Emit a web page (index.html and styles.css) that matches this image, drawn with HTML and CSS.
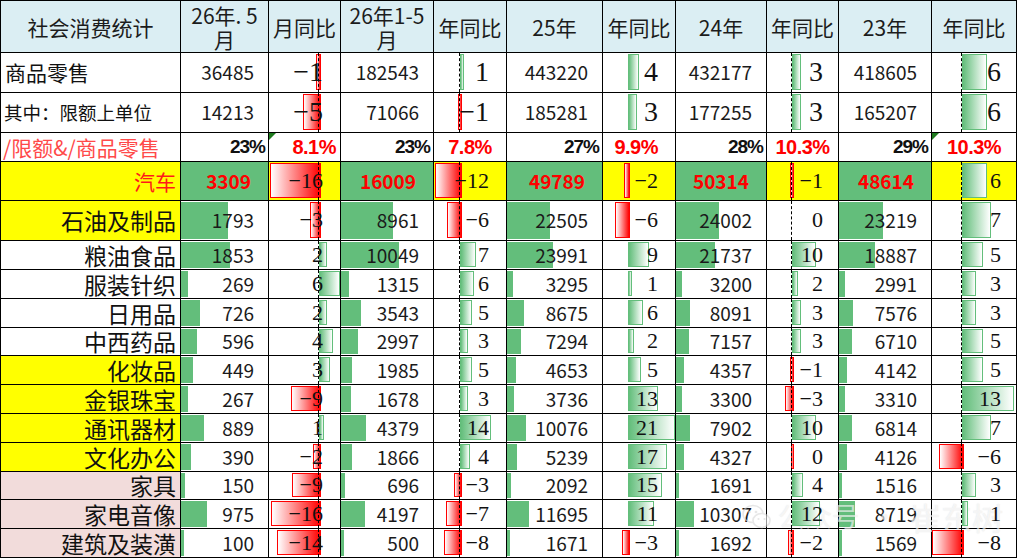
FILE: index.html
```html
<!DOCTYPE html>
<html lang="zh-CN">
<head>
<meta charset="utf-8">
<title>社会消费统计</title>
<link rel="stylesheet" href="styles.css">
</head>
<body>
<div class="sheet">
  <div class="h">社会消费统计</div>
  <div class="h">26年. 5<br>月</div>
  <div class="h">月同比</div>
  <div class="h">26年1-5<br>月</div>
  <div class="h">年同比</div>
  <div class="h">25年</div>
  <div class="h">年同比</div>
  <div class="h">24年</div>
  <div class="h">年同比</div>
  <div class="h">23年</div>
  <div class="h">年同比</div>

  <div class="lbl l">商品零售</div>
  <div class="v">36485</div>
  <div class="q m n big" style="--w:3px"><span>−1</span></div>
  <div class="v">182543</div>
  <div class="q c1 g big" style="--w:2px"><span>1</span></div>
  <div class="v">443220</div>
  <div class="q c2 g big" style="--w:9px"><span>4</span></div>
  <div class="v">432177</div>
  <div class="q c3 g big" style="--w:7px"><span>3</span></div>
  <div class="v">418605</div>
  <div class="q c4 g big" style="--w:23px"><span>6</span></div>

  <div class="lbl l sm">其中：限额上单位</div>
  <div class="v">14213</div>
  <div class="q m n big" style="--w:16px"><span>−5</span></div>
  <div class="v">71066</div>
  <div class="q c1 n big" style="--w:2px"><span>−1</span></div>
  <div class="v">185281</div>
  <div class="q c2 g big" style="--w:7px"><span>3</span></div>
  <div class="v">177255</div>
  <div class="q c3 g big" style="--w:7px"><span>3</span></div>
  <div class="v">165207</div>
  <div class="q c4 g big" style="--w:23px"><span>6</span></div>

  <div class="lbl l ratio">/限额&amp;/商品零售</div>
  <div class="pc">23%</div>
  <div class="rp r tri">8.1%</div>
  <div class="pc">23%</div>
  <div class="rp">7.8%</div>
  <div class="pc">27%</div>
  <div class="rp r2">9.9%</div>
  <div class="pc">28%</div>
  <div class="rp">10.3%</div>
  <div class="pc">29%</div>
  <div class="rp tri">10.3%</div>

  <div class="lbl y car">汽车</div>
  <div class="v car" style="--w:87px">3309</div>
  <div class="q m n y" style="--w:49px"><span>−16</span></div>
  <div class="v car" style="--w:92px">16009</div>
  <div class="q c1 n y" style="--w:25px"><span>−12</span></div>
  <div class="v car" style="--w:95px">49789</div>
  <div class="q c2 n y" style="--w:4px"><span>−2</span></div>
  <div class="v car" style="--w:90px">50314</div>
  <div class="q c3 n y" style="--w:2px"><span>−1</span></div>
  <div class="v car" style="--w:92px">48614</div>
  <div class="q c4 g y" style="--w:23px"><span>6</span></div>

  <div class="lbl y">石油及制品</div>
  <div class="v" style="--w:47px">1793</div>
  <div class="q m n" style="--w:9px"><span>−3</span></div>
  <div class="v" style="--w:52px">8961</div>
  <div class="q c1 n" style="--w:13px"><span>−6</span></div>
  <div class="v" style="--w:43px">22505</div>
  <div class="q c2 n" style="--w:13px"><span>−6</span></div>
  <div class="v" style="--w:43px">24002</div>
  <div class="q c3"><span>0</span></div>
  <div class="v" style="--w:44px">23219</div>
  <div class="q c4 g" style="--w:27px"><span>7</span></div>

  <div class="lbl">粮油食品</div>
  <div class="v" style="--w:49px">1853</div>
  <div class="q m g" style="--w:6px"><span>2</span></div>
  <div class="v" style="--w:58px">10049</div>
  <div class="q c1 g" style="--w:14px"><span>7</span></div>
  <div class="v" style="--w:46px">23991</div>
  <div class="q c2 g" style="--w:19px"><span>9</span></div>
  <div class="v" style="--w:39px">21737</div>
  <div class="q c3 g" style="--w:22px"><span>10</span></div>
  <div class="v" style="--w:36px">18887</div>
  <div class="q c4 g" style="--w:19px"><span>5</span></div>

  <div class="lbl">服装针织</div>
  <div class="v" style="--w:7px">269</div>
  <div class="q m g" style="--w:19px"><span>6</span></div>
  <div class="v" style="--w:8px">1315</div>
  <div class="q c1 g" style="--w:12px"><span>6</span></div>
  <div class="v" style="--w:6px">3295</div>
  <div class="q c2 g" style="--w:2px"><span>1</span></div>
  <div class="v" style="--w:6px">3200</div>
  <div class="q c3 g" style="--w:4px"><span>2</span></div>
  <div class="v" style="--w:6px">2991</div>
  <div class="q c4 g" style="--w:12px"><span>3</span></div>

  <div class="lbl">日用品</div>
  <div class="v" style="--w:19px">726</div>
  <div class="q m g" style="--w:6px"><span>2</span></div>
  <div class="v" style="--w:20px">3543</div>
  <div class="q c1 g" style="--w:10px"><span>5</span></div>
  <div class="v" style="--w:17px">8675</div>
  <div class="q c2 g" style="--w:13px"><span>6</span></div>
  <div class="v" style="--w:14px">8091</div>
  <div class="q c3 g" style="--w:7px"><span>3</span></div>
  <div class="v" style="--w:14px">7576</div>
  <div class="q c4 g" style="--w:12px"><span>3</span></div>

  <div class="lbl">中西药品</div>
  <div class="v" style="--w:16px">596</div>
  <div class="q m g" style="--w:12px"><span>4</span></div>
  <div class="v" style="--w:17px">2997</div>
  <div class="q c1 g" style="--w:6px"><span>3</span></div>
  <div class="v" style="--w:14px">7294</div>
  <div class="q c2 g" style="--w:4px"><span>2</span></div>
  <div class="v" style="--w:13px">7157</div>
  <div class="q c3 g" style="--w:7px"><span>3</span></div>
  <div class="v" style="--w:13px">6710</div>
  <div class="q c4 g" style="--w:19px"><span>5</span></div>

  <div class="lbl y">化妆品</div>
  <div class="v" style="--w:12px">449</div>
  <div class="q m g" style="--w:9px"><span>3</span></div>
  <div class="v" style="--w:11px">1985</div>
  <div class="q c1 g" style="--w:10px"><span>5</span></div>
  <div class="v" style="--w:9px">4653</div>
  <div class="q c2 g" style="--w:11px"><span>5</span></div>
  <div class="v" style="--w:8px">4357</div>
  <div class="q c3 n" style="--w:2px"><span>−1</span></div>
  <div class="v" style="--w:8px">4142</div>
  <div class="q c4 g" style="--w:19px"><span>5</span></div>

  <div class="lbl y">金银珠宝</div>
  <div class="v" style="--w:7px">267</div>
  <div class="q m n" style="--w:28px"><span>−9</span></div>
  <div class="v" style="--w:10px">1678</div>
  <div class="q c1 g" style="--w:6px"><span>3</span></div>
  <div class="v" style="--w:7px">3736</div>
  <div class="q c2 g" style="--w:28px"><span>13</span></div>
  <div class="v" style="--w:6px">3300</div>
  <div class="q c3 n" style="--w:7px"><span>−3</span></div>
  <div class="v" style="--w:6px">3310</div>
  <div class="q c4 g" style="--w:50px"><span>13</span></div>

  <div class="lbl y">通讯器材</div>
  <div class="v" style="--w:23px">889</div>
  <div class="q m g" style="--w:3px"><span>1</span></div>
  <div class="v" style="--w:25px">4379</div>
  <div class="q c1 g" style="--w:29px"><span>14</span></div>
  <div class="v" style="--w:19px">10076</div>
  <div class="q c2 g" style="--w:45px"><span>21</span></div>
  <div class="v" style="--w:14px">7902</div>
  <div class="q c3 g" style="--w:22px"><span>10</span></div>
  <div class="v" style="--w:13px">6814</div>
  <div class="q c4 g" style="--w:27px"><span>7</span></div>

  <div class="lbl y">文化办公</div>
  <div class="v" style="--w:10px">390</div>
  <div class="q m n" style="--w:6px"><span>−2</span></div>
  <div class="v" style="--w:11px">1866</div>
  <div class="q c1 g" style="--w:8px"><span>4</span></div>
  <div class="v" style="--w:10px">5239</div>
  <div class="q c2 g" style="--w:37px"><span>17</span></div>
  <div class="v" style="--w:8px">4327</div>
  <div class="q c3 n" style="--w:1px"><span>0</span></div>
  <div class="v" style="--w:8px">4126</div>
  <div class="q c4 n" style="--w:23px"><span>−6</span></div>

  <div class="lbl p">家具</div>
  <div class="v" style="--w:4px">150</div>
  <div class="q m n" style="--w:27px"><span>−9</span></div>
  <div class="v" style="--w:4px">696</div>
  <div class="q c1 n" style="--w:6px"><span>−3</span></div>
  <div class="v" style="--w:4px">2092</div>
  <div class="q c2 g" style="--w:32px"><span>15</span></div>
  <div class="v" style="--w:3px">1691</div>
  <div class="q c3 g" style="--w:9px"><span>4</span></div>
  <div class="v" style="--w:3px">1516</div>
  <div class="q c4 g" style="--w:12px"><span>3</span></div>

  <div class="lbl p">家电音像</div>
  <div class="v" style="--w:26px">975</div>
  <div class="q m n" style="--w:48px"><span>−16</span></div>
  <div class="v" style="--w:24px">4197</div>
  <div class="q c1 n" style="--w:14px"><span>−7</span></div>
  <div class="v" style="--w:22px">11695</div>
  <div class="q c2 g" style="--w:24px"><span>11</span></div>
  <div class="v" style="--w:18px">10307</div>
  <div class="q c3 g" style="--w:26px"><span>12</span></div>
  <div class="v" style="--w:16px">8719</div>
  <div class="q c4 g" style="--w:4px"><span>1</span></div>

  <div class="lbl p">建筑及装潢</div>
  <div class="v" style="--w:3px">100</div>
  <div class="q m n" style="--w:42px"><span>−14</span></div>
  <div class="v" style="--w:3px">500</div>
  <div class="q c1 n" style="--w:16px"><span>−8</span></div>
  <div class="v" style="--w:3px">1671</div>
  <div class="q c2 n" style="--w:6px"><span>−3</span></div>
  <div class="v" style="--w:3px">1692</div>
  <div class="q c3 n" style="--w:4px"><span>−2</span></div>
  <div class="v" style="--w:3px">1569</div>
  <div class="q c4 n" style="--w:30px"><span>−8</span></div>
</div>

<div class="wm">
  <svg class="wm-icon" width="30" height="26" viewBox="0 0 30 26" aria-hidden="true">
    <ellipse cx="11" cy="10" rx="10" ry="8.5" fill="none" stroke="#d8d8d8" stroke-width="1.6"/>
    <ellipse cx="19.5" cy="16.5" rx="8.5" ry="7" fill="#fff" stroke="#d8d8d8" stroke-width="1.6"/>
    <circle cx="7.5" cy="8" r="1.3" fill="#d8d8d8"/>
    <circle cx="14" cy="8" r="1.3" fill="#d8d8d8"/>
    <circle cx="16.5" cy="15" r="1.1" fill="#d8d8d8"/>
    <circle cx="22.5" cy="15" r="1.1" fill="#d8d8d8"/>
  </svg>
  <span class="wm-a">公众号</span><span class="wm-dot">·</span><span class="wm-b">崔东树</span>
</div>
</body>
</html>
```

FILE: styles.css
```css
* { box-sizing: border-box; margin: 0; padding: 0; }
html, body { background: #fff; }
body {
  margin: 0;
  position: relative;
  font-family: "Noto Sans CJK SC", "Noto Sans", sans-serif;
  color: #1a1a1a;
}

.sheet {
  display: grid;
  grid-template-columns: 179px 87px 71px 92px 72px 95px 72px 90px 71px 92px 84px;
  grid-template-rows: 51px 39px 39px 28px 38px 39px 28px 28px 28px 27px 28px 28px 28px 28px 27px 28px 28px;
  gap: 1px;
  padding: 1px;
  background: #000;
  width: max-content;
}

.sheet > div {
  display: flex;
  align-items: center;
  background: #fff;
  white-space: nowrap;
  overflow: hidden;
  position: relative;
}

/* header */
.sheet > .h {
  background: #dbeef3;
  justify-content: center;
  text-align: center;
  font-size: 21px;
  line-height: 24px;
  color: #1c1c1c;
}

/* row labels */
.sheet > .lbl {
  justify-content: flex-end;
  padding-right: 4px;
  font-size: 23px;
  line-height: 1;
  color: #111;
  overflow: visible;
}
.sheet > .lbl.l { justify-content: flex-start; padding-left: 4px; padding-right: 0; font-size: 21px; }
.sheet > .lbl.sm { font-size: 18.5px; padding-left: 3px; }
.sheet > .lbl.ratio { color: #ff4a4a; font-size: 21px; padding-left: 2px; }
.sheet > .y { background: #ffff00; }
.sheet > .p { background: #f2dcdb; }
.sheet > .lbl.car { color: #ff1a1a; font-size: 21px; }

/* value cells with solid data bars */
.sheet > .v {
  justify-content: flex-end;
  padding-right: 14px;
  font-size: 19px;
  line-height: 1.2;
  color: #1a1a1a;
  background: linear-gradient(#63be7b, #63be7b) no-repeat 0 1px / var(--w, 0px) calc(100% - 2px), #fff;
}
.sheet > .v.car {
  color: #ff0000;
  font-weight: 700;
  padding-right: 17px;
  background: #63be7b;
}

/* ratio row */
.sheet > .pc {
  justify-content: flex-end;
  padding-right: 3px;
  font-family: "Liberation Sans", Arial, sans-serif;
  font-weight: 700;
  font-size: 19px;
  letter-spacing: -1px;
  color: #111;
}
.sheet > .rp {
  justify-content: center;
  font-family: "Liberation Sans", Arial, sans-serif;
  font-weight: 700;
  font-size: 20px;
  letter-spacing: -0.5px;
  color: #ff0000;
}
.sheet > .rp.r { justify-content: flex-end; padding-right: 4px; }
.sheet > .rp.r2 { justify-content: flex-end; padding-right: 17px; }
.sheet > .tri::before {
  content: "";
  position: absolute;
  top: 0;
  left: 0;
  border-top: 7px solid #1e7b1e;
  border-right: 7px solid transparent;
}

/* year/month-on-year cells with gradient bars around an axis */
.sheet > .q {
  justify-content: flex-end;
  padding-right: 17px;
  font-family: "Liberation Serif", "Times New Roman", serif;
  font-size: 22px;
  line-height: 1.1;
  color: #111;
}
.sheet > .q span { position: relative; z-index: 2; }
.sheet > .q.big { font-size: 28px; }
.sheet > .q.m { --a: 50px; }
.sheet > .q.c1 { --a: 26px; }
.sheet > .q.c2 { --a: 25px; }
.sheet > .q.c3 { --a: 25px; padding-right: 15px; }
.sheet > .q.c4 { --a: 30px; padding-right: 15px; }

.sheet > .q.g::before,
.sheet > .q.n::before {
  content: "";
  position: absolute;
  top: 1px;
  bottom: 2px;
  width: var(--w);
  z-index: 1;
}
.sheet > .q.g::before {
  left: var(--a);
  background: linear-gradient(to right, #63be7b, #ffffff);
  border: 1px solid #63be7b;
}
.sheet > .q.n::before {
  left: calc(var(--a) - var(--w));
  background: linear-gradient(to right, #ffffff, #ff0000);
  border: 1px solid #ff0000;
}

.sheet > .q.m::after,
.sheet > .q.c1::after,
.sheet > .q.c3::after,
.sheet > .q.c4::after {
  content: "";
  position: absolute;
  top: 0;
  bottom: 0;
  left: calc(var(--a) - 1px);
  border-left: 1px dashed #000;
  z-index: 1;
}

/* watermark */
.wm {
  position: absolute;
  left: 742px;
  top: 498px;
  display: flex;
  align-items: center;
  gap: 6px;
  font-family: "Noto Sans CJK SC", sans-serif;
  color: rgba(255, 255, 255, 0.7);
  text-shadow: 0 0 1px rgba(150, 150, 150, 0.35);
  opacity: 0.85;
  pointer-events: none;
}
.wm-icon { opacity: 0.7; }
.wm-a { font-size: 27px; line-height: 1.2; }
.wm-dot { font-size: 27px; line-height: 1.2; margin: 0 6px; }
.wm-b { font-size: 31px; line-height: 1.2; }
```
